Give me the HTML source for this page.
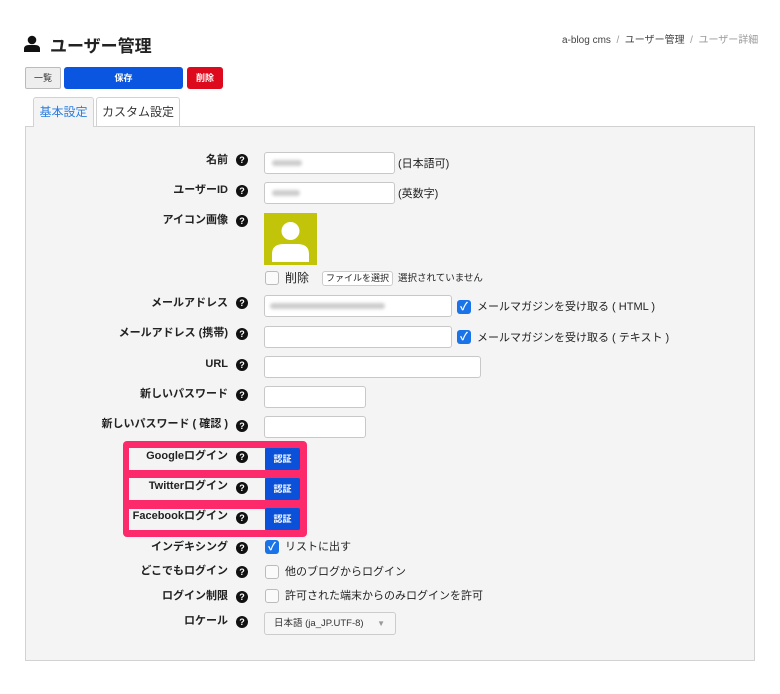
<!DOCTYPE html>
<html><head><meta charset="utf-8"><style>
*{box-sizing:border-box;margin:0;padding:0}
body{width:780px;height:694px;background:#fff;font-family:"Liberation Sans","Noto Sans CJK JP",sans-serif;position:relative;overflow:hidden;color:#222}
.a{position:absolute}
.lbl{position:absolute;right:552px;font-size:11px;font-weight:bold;color:#222;white-space:nowrap;line-height:14px}
.q{position:absolute;left:236px;width:12px;height:12px;border-radius:50%;background:#111;color:#fff;font-size:9px;font-weight:bold;text-align:center;line-height:12px}
.in{position:absolute;background:#fff;border:1px solid #c8c8c8;border-radius:3px}
.cb{position:absolute;width:14px;height:14px;border:1px solid #bbb;border-radius:3px;background:#fafafa}
.cbc{position:absolute;width:14px;height:14px;border-radius:3px;background:#1a73e8;color:#fff;font-size:11px;line-height:14px;text-align:center;font-weight:bold}
.t{position:absolute;font-size:11px;color:#222;white-space:nowrap;line-height:14px}
.btn{position:absolute;left:265px;width:35px;height:22px;background:#0a50d8;border-radius:2px;color:#fff;font-size:9px;font-weight:bold;text-align:center;line-height:22px}
.blur{position:absolute;height:6px;background:#ccc;border-radius:3px;filter:blur(1.5px)}
</style></head><body>
<svg class="a" style="left:24px;top:35px" width="16" height="17" viewBox="0 0 16 17"><circle cx="8" cy="5" r="4.3" fill="#111"/><path d="M0 17 V14 Q0 10 5 10 H11 Q16 10 16 14 V17Z" fill="#111"/></svg>
<div class="a" style="left:50px;top:32px;font-size:17px;font-weight:bold">ユーザー管理</div>
<div class="a" style="left:562px;top:31px;font-size:10px;color:#444">a-blog cms <span style="color:#999">&nbsp;/&nbsp;</span> ユーザー管理 <span style="color:#999">&nbsp;/&nbsp; ユーザー詳細</span></div>
<div class="a" style="left:25px;top:67px;width:36px;height:22px;border:1px solid #bbb;background:#eee;border-radius:2px;font-size:9px;text-align:center;line-height:20px;color:#333">一覧</div>
<div class="a" style="left:64px;top:67px;width:119px;height:22px;background:#0a56e0;border-radius:3px;font-size:9px;text-align:center;line-height:22px;color:#fff;font-weight:bold">保存</div>
<div class="a" style="left:187px;top:67px;width:36px;height:22px;background:#dd0a1e;border-radius:3px;font-size:9px;text-align:center;line-height:22px;color:#fff;font-weight:bold">削除</div>
<div class="a" style="left:25px;top:126px;width:730px;height:535px;background:#f4f4f4;border:1px solid #d2d2d2"></div>
<div class="a" style="left:33px;top:97px;width:61px;height:30px;background:#f4f4f4;border:1px solid #d2d2d2;border-bottom:none;border-radius:3px 3px 0 0;font-size:12px;color:#2a7de1;text-align:center;line-height:28px">基本設定</div>
<div class="a" style="left:96px;top:97px;width:84px;height:29px;background:#fff;border:1px solid #d2d2d2;border-bottom:none;border-radius:3px 3px 0 0;font-size:12px;color:#333;text-align:center;line-height:28px">カスタム設定</div>

<div class="lbl" style="top:153px">名前</div><div class="q" style="top:154px">?</div>
<div class="in" style="left:264px;top:152px;width:131px;height:22px"></div><div class="blur" style="left:272px;top:160px;width:30px"></div>
<div class="t" style="left:398px;top:157px">(日本語可)</div>
<div class="lbl" style="top:183px">ユーザーID</div><div class="q" style="top:185px">?</div>
<div class="in" style="left:264px;top:182px;width:131px;height:22px"></div><div class="blur" style="left:272px;top:190px;width:28px"></div>
<div class="t" style="left:398px;top:187px">(英数字)</div>
<div class="lbl" style="top:213px">アイコン画像</div><div class="q" style="top:215px">?</div>
<div class="a" style="left:264px;top:213px;width:53px;height:52px;background:#c2c40a"></div>
<svg class="a" style="left:267px;top:216px" width="47" height="46"><circle cx="23.5" cy="15" r="9" fill="#fff"/><path d="M5 46 V38 Q5 28 17 28 H30 Q42 28 42 38 V46Z" fill="#fff"/></svg>
<div class="cb" style="left:265px;top:271px"></div><div class="t" style="left:285px;top:271px;font-size:12px">削除</div>
<div class="a" style="left:322px;top:271px;width:71px;height:15px;border:1px solid #ccc;border-radius:3px;background:#fff;font-size:9px;line-height:13px;text-align:center">ファイルを選択</div>
<div class="t" style="left:398px;top:272px;font-size:9.5px">選択されていません</div>

<div class="lbl" style="top:296px">メールアドレス</div><div class="q" style="top:297px">?</div>
<div class="in" style="left:264px;top:295px;width:188px;height:22px"></div><div class="blur" style="left:270px;top:303px;width:115px"></div>
<div class="cbc" style="left:457px;top:300px">✓</div><div class="t" style="left:477px;top:300px">メールマガジンを受け取る ( HTML )</div>
<div class="lbl" style="top:326px">メールアドレス (携帯)</div><div class="q" style="top:328px">?</div>
<div class="in" style="left:264px;top:326px;width:188px;height:22px"></div>
<div class="cbc" style="left:457px;top:330px">✓</div><div class="t" style="left:477px;top:331px">メールマガジンを受け取る ( テキスト )</div>
<div class="lbl" style="top:357px">URL</div><div class="q" style="top:359px">?</div>
<div class="in" style="left:264px;top:356px;width:217px;height:22px"></div>
<div class="lbl" style="top:387px">新しいパスワード</div><div class="q" style="top:389px">?</div>
<div class="in" style="left:264px;top:386px;width:102px;height:22px"></div>
<div class="lbl" style="top:417px">新しいパスワード ( 確認 )</div><div class="q" style="top:420px">?</div>
<div class="in" style="left:264px;top:416px;width:102px;height:22px"></div>

<div class="a" style="left:123px;top:441px;width:184px;height:96px;background:#fd2a6b;border-radius:4px"></div>
<div class="a" style="left:129px;top:448px;width:136px;height:22px;background:#f4f4f4"></div>
<div class="a" style="left:129px;top:478px;width:136px;height:22px;background:#f4f4f4"></div>
<div class="a" style="left:129px;top:509px;width:136px;height:21px;background:#f4f4f4"></div>
<div class="lbl" style="top:449px">Googleログイン</div><div class="q" style="top:451px">?</div><div class="btn" style="top:448px">認証</div>
<div class="lbl" style="top:479px">Twitterログイン</div><div class="q" style="top:482px">?</div><div class="btn" style="top:478px">認証</div>
<div class="lbl" style="top:509px">Facebookログイン</div><div class="q" style="top:512px">?</div><div class="btn" style="top:508px">認証</div>

<div class="lbl" style="top:540px">インデキシング</div><div class="q" style="top:542px">?</div>
<div class="cbc" style="left:265px;top:540px">✓</div><div class="t" style="left:285px;top:540px">リストに出す</div>
<div class="lbl" style="top:564px">どこでもログイン</div><div class="q" style="top:566px">?</div>
<div class="cb" style="left:265px;top:565px"></div><div class="t" style="left:285px;top:565px">他のブログからログイン</div>
<div class="lbl" style="top:589px">ログイン制限</div><div class="q" style="top:591px">?</div>
<div class="cb" style="left:265px;top:589px"></div><div class="t" style="left:285px;top:589px">許可された端末からのみログインを許可</div>
<div class="lbl" style="top:614px">ロケール</div><div class="q" style="top:616px">?</div>
<div class="a" style="left:264px;top:612px;width:132px;height:23px;border:1px solid #ccc;border-radius:3px;background:#f6f6f6;font-size:9.5px;line-height:21px;padding-left:9px;color:#333">日本語 (ja_JP.UTF-8)<span style="position:absolute;right:10px;color:#999;font-size:8px">▼</span></div>
</body></html>
